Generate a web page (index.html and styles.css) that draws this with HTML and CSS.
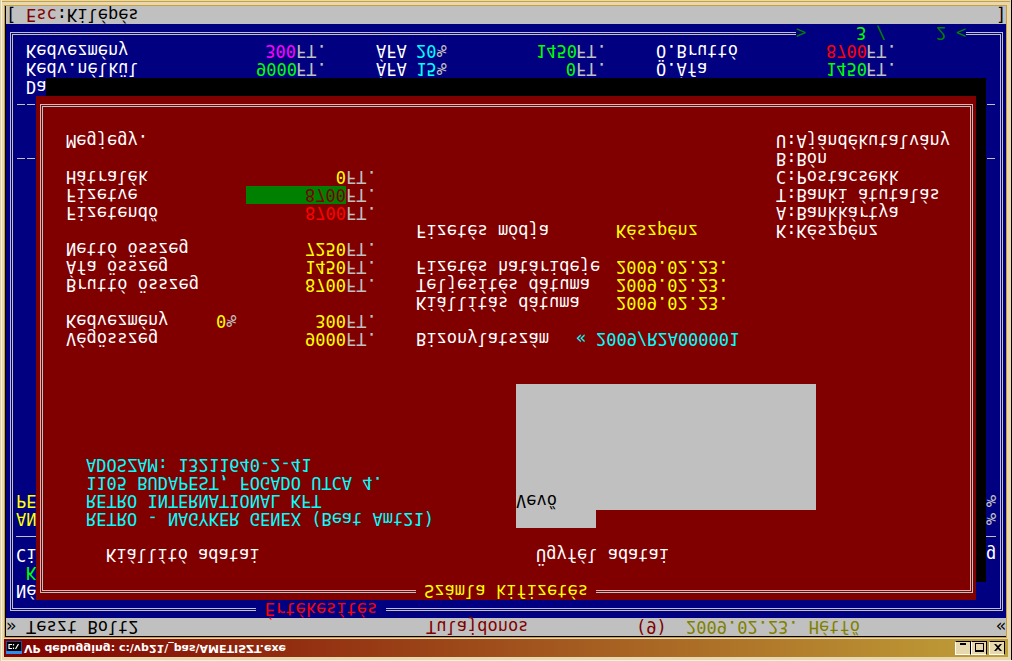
FILE: index.html
```
<!DOCTYPE html>
<html lang="hu">
<head>
<meta charset="utf-8">
<title>VP debugging</title>
<link rel="stylesheet" href="styles.css">
</head>
<body>
<div class="window">
  <header class="titlebar">
    <svg class="app-icon" viewBox="0 0 16 13" aria-hidden="true">
      <rect width="16" height="13" fill="#1c4c9c"/>
      <rect width="16" height="3" fill="#2c8cf0"/>
      <rect x="1" y="3" width="14" height="9" fill="#000"/>
      <path d="M6 5.500H3V9.500H6M7.500 5v1.500M7.500 8.500V10M9.500 10l3-5" stroke="#fff" stroke-width="1.200" fill="none" transform="matrix(1 0 0 -1 0 15)"/>
    </svg>
    <h1 class="caption">VP debugging: c:\vp21\_pas\AMETISZT.exe</h1>
    <div class="window-buttons">
      <button class="win-btn" aria-label="Minimize"><svg viewBox="0 0 12 11"><path d="M2 8h6v2H2z"/></svg></button>
      <button class="win-btn" aria-label="Maximize"><svg viewBox="0 0 12 11"><path d="M1 1h9v9H1zM2 3v6h7V3z" fill-rule="evenodd"/></svg></button>
      <button class="win-btn win-close" aria-label="Close"><svg viewBox="0 0 12 11"><path d="M2 2h2l2 2 2-2h2L7 5.500 10 9H8L6 7 4 9H2l3-3.500z"/></svg></button>
    </div>
  </header>

  <main class="screen">
    <div class="bar bar-top">
      <span class="c1">»</span>
      <span class="c3">Teszt Bolt2</span>
      <span class="c43 maroon">Tulajdonos</span>
      <span class="c64 maroon">(9)</span>
      <span class="c69 olive">2009.02.23. Hétfő</span>
      <span class="c100">«</span>
    </div>

    <div class="frame"></div>
    <h2 class="screen-title">Értékesítés</h2>

    <div class="lines sale-head">
      <div class="line"><span class="c2">Né</span></div>
      <div class="line"><span class="c3 lime">K</span></div>
      <div class="line"><span class="c2">Ci</span><span class="c99">g</span></div>
      <div class="line"><hr class="rule rule-left"><hr class="rule rule-right"></div>
      <div class="line"><span class="c2 yellow">AN</span><span class="c99 silver">%</span></div>
      <div class="line"><span class="c2 yellow">PE</span><span class="c99 silver">%</span></div>
    </div>
    <div class="lines sale-middle"><div class="line"><hr class="rule dashed rule-left"><hr class="rule dashed rule-right"></div></div>
    <div class="lines sale-foot">
      <div class="line"><hr class="rule dashed rule-left"><hr class="rule dashed rule-right"></div>
      <div class="line"><span class="c3">Da</span></div>
      <div class="line">
        <span class="c3">Kedv.nélkül</span>
        <span class="sum-a lime">9000</span><span class="c30 silver">FT.</span>
        <span class="c38">ÁFA</span><span class="c42 cyan">15<span class="silver">%</span></span>
        <span class="sum-b lime">0</span><span class="c58 silver">FT.</span>
        <span class="c66">Ö.Áfa</span>
        <span class="sum-c lime">1450</span><span class="c87 silver">FT.</span>
      </div>
      <div class="line">
        <span class="c3">Kedvezmény</span>
        <span class="sum-a magenta">300</span><span class="c30 silver">FT.</span>
        <span class="c38">ÁFA</span><span class="c42 cyan">20<span class="silver">%</span></span>
        <span class="sum-b lime">1450</span><span class="c58 silver">FT.</span>
        <span class="c66">Ö.Bruttó</span>
        <span class="sum-c red">8700</span><span class="c87 silver">FT.</span>
      </div>
    </div>
    <div class="pager">
      <span class="c1">&gt;</span><span class="c7 lime">3</span><span class="c9">/</span><span class="c15">2</span><span class="c17">&lt;</span>
    </div>

    <div class="shadow"></div>
    <section class="dialog" aria-labelledby="dialog-title">
      <div class="frame"></div>
      <h2 class="dialog-title" id="dialog-title">Számla kifizetés</h2>

      <div class="issuer">
        <h3 class="issuer-title">Kiállító adatai</h3>
        <p>RETRO - NAGYKER GENEX (Beat Amt21)</p>
        <p>RETRO INTERNATIONAL KFT</p>
        <p>1105 BUDAPEST, FOGADO UTCA 4.</p>
        <p>ADOSZAM: 13211640-2-41</p>
      </div>

      <h3 class="customer-title"><label for="customer">Ügyfél adatai</label></h3>
      <input class="customer-code" aria-label="Ügyfél kód">
      <textarea class="customer" id="customer">Vevő</textarea>

      <div class="totals">
        <div class="line"><span>Végösszeg</span><span class="amount">9000</span><span class="unit">FT.</span></div>
        <div class="line"><span>Kedvezmény</span><span class="percent">0<span class="silver">%</span></span><span class="amount">300</span><span class="unit">FT.</span></div>
        <div class="line spaced"><span>Bruttó összeg</span><span class="amount">8700</span><span class="unit">FT.</span></div>
        <div class="line"><span>Áfa összeg</span><span class="amount">1450</span><span class="unit">FT.</span></div>
        <div class="line"><span>Nettó összeg</span><span class="amount">7250</span><span class="unit">FT.</span></div>
        <div class="line spaced"><span>Fizetendő</span><span class="amount red">8700</span><span class="unit">FT.</span></div>
        <div class="line"><label for="paid">Fizetve</label><input class="paid" id="paid" value="8700"><span class="unit">FT.</span></div>
        <div class="line"><span>Hátralék</span><span class="amount">0</span><span class="unit">FT.</span></div>
        <div class="line spaced"><span>Megjegy.</span></div>
      </div>

      <div class="document">
        <div class="line"><span>Bizonylatszám</span><span class="mark">«</span><span class="number">2009/R2A000001</span></div>
        <div class="line spaced"><span>Kiállítás dátuma</span><span class="value">2009.02.23.</span></div>
        <div class="line"><span>Teljesítés dátuma</span><span class="value">2009.02.23.</span></div>
        <div class="line"><span>Fizetés határideje</span><span class="value">2009.02.23.</span></div>
        <div class="line spaced"><span>Fizetés módja</span><span class="value">Készpénz</span></div>
      </div>

      <ul class="methods">
        <li>K:Készpénz</li>
        <li>A:Bankkártya</li>
        <li>T:Banki átutalás</li>
        <li>C:Postacsekk</li>
        <li>B:Bón</li>
        <li>U:Ajándékutalvány</li>
      </ul>
    </section>

    <div class="bar bar-bottom">
      <span class="c1">[</span>
      <button class="key"><span class="maroon">Esc</span>:Kilépés</button>
      <span class="c100">]</span>
    </div>
  </main>
</div>
</body>
</html>
```
FILE: styles.css
```
* { box-sizing: border-box; }

body {
  margin: 0;
  background: #e8d8b0;
}

h1, h2, h3, p, ul {
  margin: 0;
  padding: 0;
  font: inherit;
  list-style: none;
}

button, input, textarea {
  margin: 0;
  padding: 0;
  border: 0;
  border-radius: 0;
  font: inherit;
  color: inherit;
  background: none;
  outline: 0;
}

/* The whole window is mirrored top to bottom */
.window {
  transform: scaleY(-1);
  padding: 4px 6px 6px 5px;
  background: #e8d8b0;
  box-shadow: inset 1px 0 #e0d0a0, inset 2px 1px #f8f0d8, inset -1px 0 #000,
    inset -2px -1px #e8d8b0, inset -2px -2px #c8a040;
}

.titlebar {
  display: flex;
  align-items: center;
  height: 18px;
  margin: 0 -2px 0 -1px;
  padding: 0 3px 0 2px;
  background: linear-gradient(to right, #800000, #c0a038);
}

.app-icon {
  width: 16px;
  height: 13px;
}

.caption {
  flex: 1;
  padding-left: 2px;
  font: bold 11px/18px "DejaVu Sans", sans-serif;
  color: #fff;
}

.window-buttons { display: flex; }

.win-btn {
  width: 16px;
  height: 14px;
  padding: 1px 2px 2px 2px;
  background: #e8d8b0;
  border-style: solid;
  border-width: 1px;
  border-color: #fff #000 #000 #fff;
}

.win-close { margin-left: 2px; }

.win-btn svg {
  display: block;
  width: 12px;
  height: 11px;
}

.screen {
  display: grid;
  grid-template-columns: repeat(100, minmax(0, 1fr));
  grid-template-rows: repeat(35, 18px);
  margin-top: 2px;
  border-top: 1px solid #000;
  border-left: 1px solid #000;
  outline: 1px solid #c8a040;
  background: #000080;
  color: #fff;
  font: 17px/18px "DejaVu Sans Mono", monospace;
  white-space: nowrap;
}

.bar, .lines, .line, .pager, .dialog, .issuer, .totals, .document {
  display: grid;
  grid-template-columns: subgrid;
}

.bar, .lines, .line { grid-column: 1 / -1; }

.line { height: 18px; }
.spaced { margin-top: 18px; }

.bar {
  background: #c0c0c0;
  color: #000;
}

.bar-top { grid-row: 1; }
.bar-bottom { grid-row: 35; }

.key {
  grid-column: 3 / span 11;
  text-align: left;
}

.frame {
  margin: 7px 3px 8px 4px;
  border: 3px double #c0c0c0;
}

.screen > .frame { grid-area: 2 / 1 / 35 / -1; }

.screen-title {
  grid-area: 2 / 26 / 3 / span 13;
  background: #000080;
  color: #f00;
  text-align: center;
}

.lines { align-content: start; }
.sale-head { grid-row: 3 / 9; }
.sale-middle { grid-row: 27; }
.sale-foot { grid-row: 30 / 34; }

.rule {
  align-self: start;
  width: 100%;
  height: 1px;
  margin: 9px 0 0;
  border: 0;
  background: #c0c0c0;
}

.dashed { background: repeating-linear-gradient(to right, #000080 0 1px, #c0c0c0 1px 9px, #000080 9px 10px); }

.rule-left { grid-column: 2 / span 2; }
.rule-right { grid-column: 99; }

.sum-a, .sum-b, .sum-c { text-align: right; }
.sum-a { grid-column: 26 / span 4; }
.sum-b { grid-column: 54 / span 4; }
.sum-c { grid-column: 83 / span 4; }

.pager {
  grid-area: 34 / 80 / 35 / span 17;
  background: #000080;
  color: #008000;
}

.shadow {
  grid-area: 4 / 5 / 32 / span 94;
  background: #000;
}

.dialog {
  grid-area: 3 / 4 / 31 / span 94;
  grid-template-rows: subgrid;
  background: #800000;
}

.dialog > .frame { grid-area: 1 / 1 / -1 / -1; }

.dialog-title {
  grid-area: 1 / 39 / 2 / span 18;
  background: #800000;
  color: #ff0;
  text-align: center;
}

.issuer {
  grid-area: 3 / 6 / 9 / span 36;
  align-content: start;
  color: #0ff;
}

.issuer > p { grid-column: 1 / -1; }

.issuer-title {
  grid-column: 3 / -1;
  margin-bottom: 18px;
  color: #fff;
}

.customer-title { grid-area: 3 / 51 / 4 / span 14; }

.customer-code {
  grid-area: 5 / 49 / 6 / span 8;
  width: 100%;
  background: #c0c0c0;
}

.customer {
  grid-area: 6 / 49 / 13 / span 30;
  resize: none;
  overflow: hidden;
  background: #c0c0c0;
  color: #000;
}

.totals {
  grid-area: 15 / 4 / 27 / span 31;
  align-content: start;
}

.totals .line > :first-child { grid-column: 1 / span 14; }

.percent {
  grid-column: 16 / span 2;
  color: #ff0;
}

.amount {
  grid-column: 19 / span 10;
  color: #ff0;
  text-align: right;
}

.paid {
  grid-column: 19 / span 10;
  width: 100%;
  background: #008000;
  color: #800000;
  text-align: right;
}

.unit {
  grid-column: 29 / span 3;
  color: #c0c0c0;
}

.document {
  grid-area: 15 / 39 / 22 / span 34;
  align-content: start;
}

.document .line > :first-child { grid-column: 1 / span 18; }

.mark {
  grid-column: 17;
  color: #0ff;
}

.number {
  grid-column: 19 / -1;
  color: #0ff;
}

.value {
  grid-column: 21 / -1;
  color: #ff0;
}

.methods { grid-area: 21 / 75 / 27 / span 18; }

.c1 { grid-column-start: 1; }
.c2 { grid-column-start: 2; }
.c3 { grid-column-start: 3; }
.c7 { grid-column-start: 7; }
.c9 { grid-column-start: 9; }
.c15 { grid-column-start: 15; }
.c17 { grid-column-start: 17; }
.c30 { grid-column-start: 30; }
.c38 { grid-column-start: 38; }
.c42 { grid-column-start: 42; }
.c43 { grid-column-start: 43; }
.c58 { grid-column-start: 58; }
.c64 { grid-column-start: 64; }
.c66 { grid-column-start: 66; }
.c69 { grid-column-start: 69; }
.c87 { grid-column-start: 87; }
.c99 { grid-column-start: 99; }
.c100 { grid-column-start: 100; }

.line > *, .bar > *, .pager > * { grid-row: 1; }

.maroon { color: #800000; }
.olive { color: #808000; }
.lime { color: #0f0; }
.yellow { color: #ff0; }
.cyan { color: #0ff; }
.magenta { color: #f0f; }
.red { color: #f00; }
.silver { color: #c0c0c0; }
```
